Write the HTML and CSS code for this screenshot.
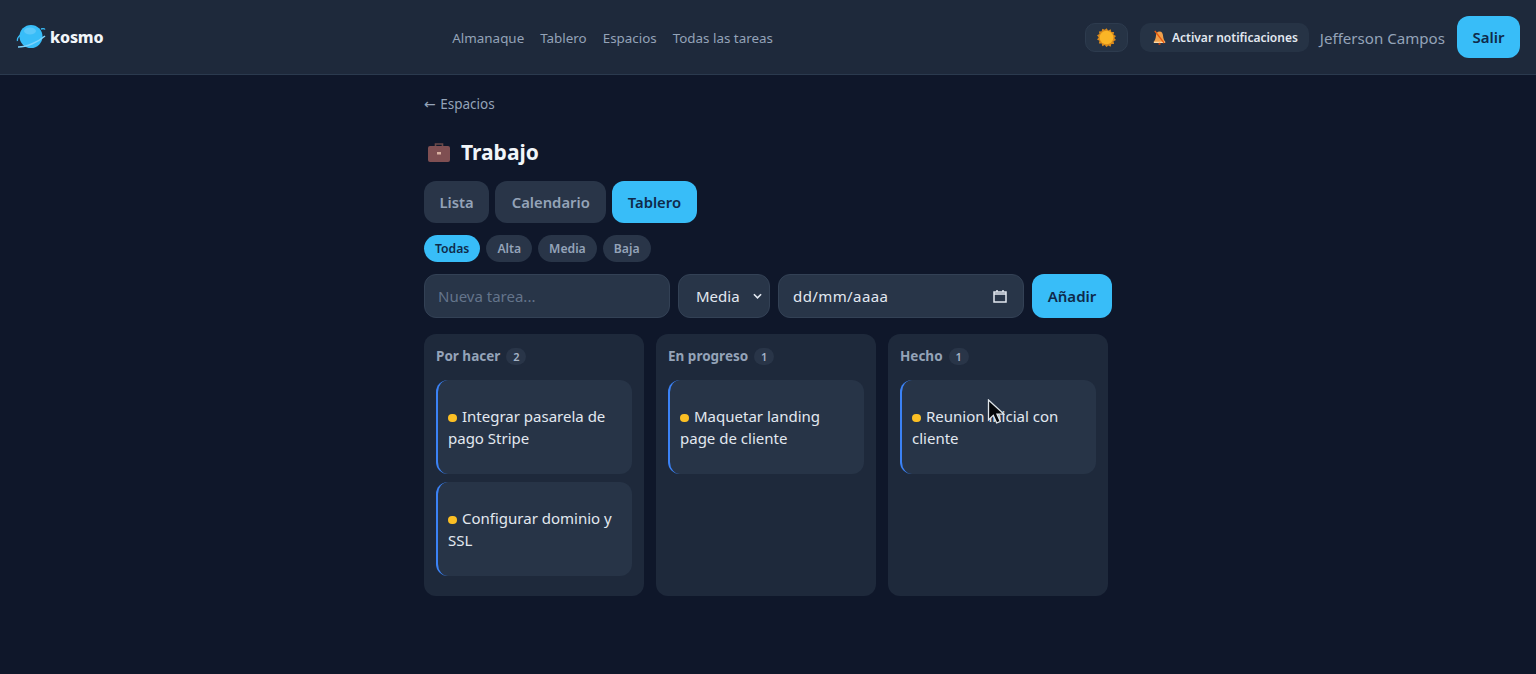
FILE: index.html
```html
<!DOCTYPE html>
<html lang="es">
<head>
<meta charset="utf-8">
<title>Kosmo</title>
<link rel="stylesheet" href="styles.css">
</head>
<body>
<header class="topbar">
  <a class="brand">
    <svg class="brand-icon" viewBox="0 0 30 26" width="30" height="26"><path d="M5 10.500C2.500 12.500 1 15 1.500 17M25 5c2-.5 3.500-.3 4 .5" fill="none" stroke="#38bdf8" stroke-width="1.300"/><circle cx="15" cy="12.500" r="11.500" fill="#38bdf8"/><ellipse cx="14" cy="7" rx="6" ry="3.500" fill="#7dd3fc" opacity=".5"/><path d="M2 23C11 23 22 18 29 12" fill="none" stroke="#7dd3fc" stroke-width="1.500"/></svg>
    <span>kosmo</span>
  </a>
  <nav class="mainnav">
    <a>Almanaque</a><a>Tablero</a><a>Espacios</a><a>Todas las tareas</a>
  </nav>
  <div class="actions">
    <button class="theme-btn"><svg viewBox="0 0 20 20" width="19" height="19"><path d="M10 0l1.800 2.300 2.600-1.200.7 2.800 2.900.1-.6 2.800 2.600 1.300-1.800 2.200 1.800 2.200-2.600 1.300.6 2.800-2.900.1-.7 2.800-2.600-1.200L10 20l-1.800-2.300-2.600 1.200-.7-2.800-2.900-.1.6-2.800L0 11.900l1.800-2.200L0 7.500l2.600-1.300L2 3.400l2.900-.1.700-2.800 2.600 1.200z" transform="translate(0 .2)" fill="#d98a1c"/><circle cx="10" cy="10" r="7.200" fill="#fbb526"/></svg></button>
    <button class="notify-btn"><svg viewBox="0 0 16 16" width="15" height="15"><path d="M8 1.500c-2.600 0-3.600 2.200-3.800 4.800C4 9 3 11.500 1.500 13h13C13 11.500 12 9 11.800 6.300 11.600 3.700 10.600 1.500 8 1.500z" fill="#f0a04b"/><path d="M2 13.200h12" stroke="#fcd9a8" stroke-width="1.400"/><circle cx="8" cy="14.800" r="1.200" fill="#c2410c"/><path d="M3 1l10 13" stroke="#ea580c" stroke-width="1.500"/></svg><span class="notify-label">Activar notificaciones</span></button>
    <span class="user">Jefferson Campos</span>
    <button class="primary logout">Salir</button>
  </div>
</header>
<main class="page">
  <a class="back"><span class="arrow">←</span> Espacios</a>
  <h1 class="title">
    <svg viewBox="0 0 24 22" width="24" height="22"><path d="M8.500 5V3h7v2" fill="none" stroke="#6b4a4a" stroke-width="1.600"/><rect x="1" y="5" width="22" height="16" rx="2" fill="#7f4f52"/><rect x="10" y="11" width="4" height="2.500" fill="#d9b0a0"/></svg>
    <span>Trabajo</span>
  </h1>
  <div class="tabs">
    <button class="tab">Lista</button><button class="tab">Calendario</button><button class="tab primary">Tablero</button>
  </div>
  <div class="chips">
    <button class="chip on">Todas</button><button class="chip">Alta</button><button class="chip">Media</button><button class="chip">Baja</button>
  </div>
  <form class="newtask">
    <input class="field task" placeholder="Nueva tarea...">
    <div class="field prio"><span>Media</span><svg viewBox="0 0 10 6" width="9" height="6"><path d="M1 1l4 4 4-4" fill="none" stroke="#e2e8f0" stroke-width="1.800"/></svg></div>
    <div class="field date"><span class="date-text">dd/mm/aaaa</span><svg viewBox="0 0 14 14" width="14" height="14"><path d="M1 3h12v10H1zM1 5h12M4 1v2M10 1v2" fill="none" stroke="#e2e8f0" stroke-width="1.500"/></svg></div>
    <button type="button" class="primary add">Añadir</button>
  </form>
  <section class="board">
    <div class="col">
      <h2>Por hacer <span class="count">2</span></h2>
      <article class="card"><i class="dot"></i>Integrar pasarela de pago Stripe</article>
      <article class="card"><i class="dot"></i>Configurar dominio y SSL</article>
    </div>
    <div class="col">
      <h2>En progreso <span class="count">1</span></h2>
      <article class="card"><i class="dot"></i>Maquetar landing page de cliente</article>
    </div>
    <div class="col">
      <h2>Hecho <span class="count">1</span></h2>
      <article class="card"><i class="dot"></i>Reunion inicial con cliente</article>
    </div>
  </section>
</main>
<svg class="cursor" viewBox="0 0 18 26" width="18" height="26"><path d="M1.500 1v20l4.800-4.600 3.400 7.600 3.600-1.600-3.300-7.300h6.800z" fill="#05080c" stroke="#dfe5ea" stroke-width="1.300"/></svg>
</body>
</html>
```
FILE: styles.css
```css
* { box-sizing: border-box; }
html, body { margin: 0; height: 100%; }
body {
  background: #0f172a;
  color: #e2e8f0;
  font-family: "Noto Sans", "Open Sans", sans-serif;
  overflow: hidden;
}
button, input { font-family: inherit; }
.topbar {
  height: 75px;
  display: flex;
  align-items: center;
  padding: 0 16px;
  background: #1e293b;
  border-bottom: 1px solid #2b3a4e;
}
.brand { display: flex; align-items: center; gap: 4px; font-weight: 800; font-size: 16px; color: #f1f5f9; letter-spacing: -0.2px; }
.mainnav { display: flex; gap: 16px; margin-left: 349px; padding-top: 1px; font-size: 13.400px; color: #94a3b8; }
.actions { display: flex; align-items: center; margin-left: auto; }
.theme-btn {
  width: 43px; height: 29px; display: flex; align-items: center; justify-content: center; padding: 0;
  background: #263345; border: 1px solid #2d3b4e; border-radius: 10px; margin-right: 12px;
}
.notify-btn {
  height: 29px; display: flex; align-items: center; gap: 5px; padding: 0 11px 0 12px;
  background: #263345; border: 0; border-radius: 10px; margin-right: 11px;
  color: #e2e8f0; font-size: 12px; font-weight: 600;
}
.notify-label { padding-top: 1px; }
.user { font-size: 15.100px; line-height: 22px; padding-top: 1px; color: #94a3b8; margin-right: 12px; }
.primary { background: #38bdf8; color: #0f2a4a; border: 0; font-weight: 600; }
.logout { width: 63px; height: 42px; border-radius: 12px; font-size: 15px; }
.page { width: 688px; margin: 0 auto; padding-top: 19px; display: flex; flex-direction: column; align-items: flex-start; }
.back { font-size: 13.500px; line-height: 20px; color: #94a3b8; }
.arrow { font-family: "DejaVu Sans", sans-serif; font-size: 14px; margin-right: 1px; }
.title { display: flex; align-items: center; gap: 10px; margin: 23px 0 0 3px; font-size: 21px; line-height: 30px; font-weight: 700; color: #f1f5f9; }
.tabs { display: flex; gap: 6px; margin-top: 14px; }
.tab { height: 42px; padding: 0 15.500px; border: 0; border-radius: 12px; background: #293548; color: #94a3b8; font-size: 14.800px; font-weight: 600; }
.tab:nth-child(2) { padding: 0 16.500px; }
.tab.primary { background: #38bdf8; color: #0f2a4a; }
.chips { display: flex; gap: 6px; margin-top: 12px; }
.chip { height: 27px; padding: 0 11px; border: 0; border-radius: 14px; background: #293548; color: #94a3b8; font-size: 12.200px; font-weight: 600; }
.chip.on { background: #38bdf8; color: #0f2a4a; }
.newtask { display: flex; gap: 8px; margin-top: 12px; width: 688px; }
.field {
  height: 44px; background: #283548; border: 1px solid #334155; border-radius: 12px;
  color: #e2e8f0; font-size: 15px; display: flex; align-items: center;
}
.task { width: 246px; padding: 0 13px; outline: 0; }
.task::placeholder { color: #64748b; opacity: 1; }
.prio { width: 92px; padding: 0 7px 0 17px; justify-content: space-between; }
.date { width: 246px; padding: 0 16px 0 14px; justify-content: space-between; }
.date-text { letter-spacing: 0.400px; }
.add { width: 80px; height: 44px; border-radius: 12px; font-size: 15px; }
.board { display: flex; gap: 12px; margin-top: 16px; align-items: stretch; }
.col { width: 220px; height: 262px; padding: 12px; background: #1e293b; border-radius: 12px; display: flex; flex-direction: column; gap: 8px; }
.col h2 { margin: 0 0 6px; font-size: 13.500px; line-height: 20px; font-weight: 700; color: #94a3b8; display: flex; align-items: center; gap: 6px; }
.count { min-width: 20px; height: 17px; border-radius: 9px; background: #293548; font-size: 11px; line-height: 17px; text-align: center; font-weight: 600; color: #a5b3c6; }
.card {
  height: 94px; padding: 25px 12px 0 10px; background: #273447; border-left: 2px solid #3b82f6; border-radius: 12px;
  font-size: 15px; line-height: 22px; color: #e2e8f0;
}
.dot { display: inline-block; width: 8.500px; height: 8.500px; border-radius: 50%; background: #fbbf24; margin-right: 5.500px; }
.cursor { position: absolute; left: 987px; top: 399px; }
```
